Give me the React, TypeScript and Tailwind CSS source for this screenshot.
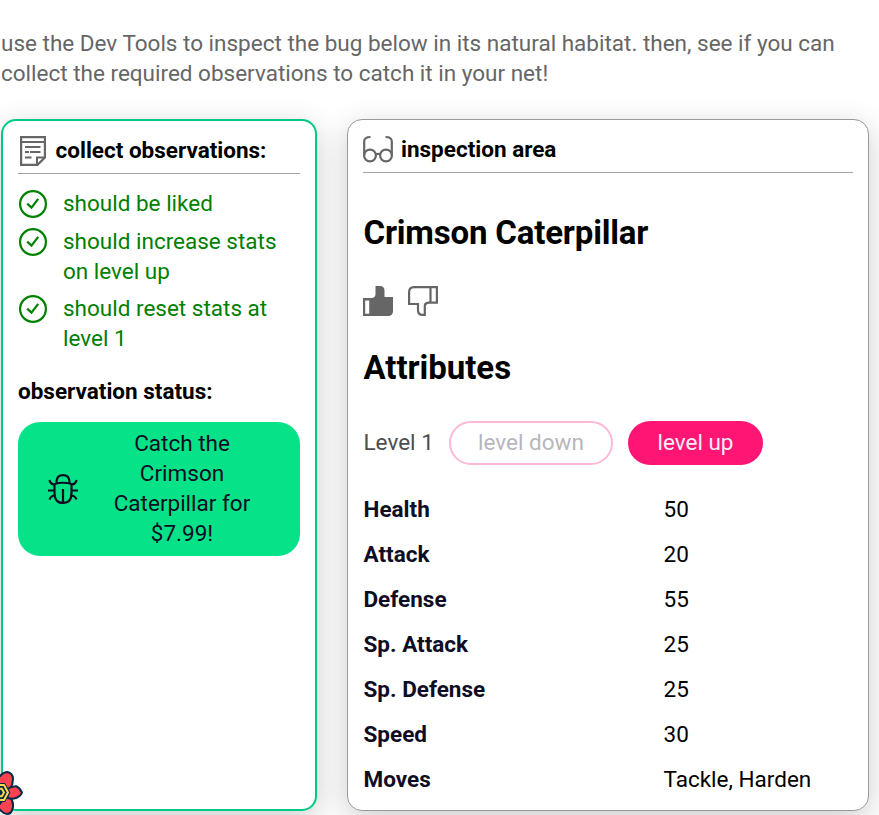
const stats: [string, string][] = [
  ['Health', '50'],
  ['Attack', '20'],
  ['Defense', '55'],
  ['Sp. Attack', '25'],
  ['Sp. Defense', '25'],
  ['Speed', '30'],
  ['Moves', 'Tackle, Harden'],
];

const observations = ['should be liked', 'should increase stats on level up', 'should reset stats at level 1'];

function NoteIcon() {
  return (
    <svg className="ml-[2px] h-[30px] w-[26px] shrink-0" viewBox="0 0 26 30" fill="none" stroke="#666" strokeWidth="2.200">
      <path d="M1.100 1.100H24.900V21.500L17.500 28.900H1.100Z" />
      <path d="M1 6H25M5 11H20.500M5 16H9M10 16H20.500M5 21.500H11.500M17 28.500V21.500H24.500" strokeWidth="2" />
    </svg>
  );
}

function GlassesIcon() {
  return (
    <svg className="h-[30px] w-[30px] shrink-0" viewBox="0 0 30 30" fill="none" stroke="#666" strokeWidth="2.200">
      <circle cx="7" cy="20.500" r="5.900" />
      <circle cx="23" cy="20.500" r="5.900" />
      <path d="M12.600 19.200Q15 18.400 17.400 19.200M1.200 20V6.500Q1.200 2 7.500 2M28.800 20V6.500Q28.800 2 22.500 2" />
    </svg>
  );
}

function CheckIcon() {
  return (
    <svg className="mt-[2px] h-7 w-7 shrink-0" viewBox="0 0 28 28" fill="none" stroke="#008000" strokeWidth="2.200">
      <circle cx="14" cy="14" r="12.900" />
      <path d="M8.200 13.600L12.500 17.600L19.200 8.800" strokeWidth="2.200" />
    </svg>
  );
}

function BugIcon() {
  return (
    <svg className="h-[30px] w-[30px] shrink-0" viewBox="0 0 30 30" fill="none" stroke="#0f0d23" strokeWidth="2.200">
      <path d="M6.500 10Q15 7.500 23.500 10V19Q23.500 28.900 15 28.900Q6.500 28.900 6.500 19ZM8.500 9V7.500Q9 1.200 15 1.200Q21 1.200 21.500 7.500V9M15 15V29M0 16.500H6.500M23.500 16.500H30M1.500 6Q2 10 6.500 10.500M28.500 6Q28 10 23.500 10.500M1.500 25.500Q3 21.500 7 21.500M28.500 25.500Q27 21.500 23 21.500" />
    </svg>
  );
}

function ThumbUp() {
  return (
    <svg className="h-[30px] w-[30px]" viewBox="0 0 30 30">
      <path fill="#666" fillRule="evenodd" d="M0 12H9Q12.500 11.500 12.500 8V0H17Q21.500 0 21.500 5V11H30V25Q30 30 25 30H0ZM2.200 14.500V27.800H6.200V14.500Z" />
    </svg>
  );
}

function ThumbDown() {
  return (
    <svg className="h-[30px] w-[30px]" viewBox="0 0 30 30" fill="none" stroke="#666" strokeWidth="2.200">
      <path d="M28.900 1.100V16.700H20.500Q16.800 17 16.800 20V28.900H14.500Q10 28.900 10 24V18H1.100V6Q1.100 1.100 6 1.100ZM22.500 1V16.500" />
    </svg>
  );
}

function FlowerBadge() {
  return (
    <svg className="absolute bottom-0 left-0 h-[45px] w-6" viewBox="0 0 24 45" stroke="#002b41" strokeWidth="2" strokeLinejoin="round">
      <g fill="#ff4154">
        <path d="M-2 9Q2 2 7.500 2Q12.500 3 13 8.500Q13 14 10.500 19L7 21L-2 14Z" />
        <path d="M-2 36L7 25L10 27Q13.500 31 13 37Q12 43.500 7.500 44Q2 43.500 -2 37Z" />
        <path d="M7 19Q12 16 16.500 16.300Q20 18 22 22.500Q21 26 16 28Q12 29.500 8 28Z" />
      </g>
      <path fill="#002b41" stroke="none" d="M-6 13H5L10.500 22.500L5 32H-6Z" />
      <path fill="none" stroke="#ffd94c" d="M-4 15H4L8 22.500L4 30H-4M-4 18.800H1.800L4 22.500L1.800 26.200H-4" />
    </svg>
  );
}

export default function App() {
  return (
    <div className="relative h-[815px] w-[879px] overflow-hidden bg-white font-['Roboto',sans-serif] text-[22.5px] leading-[30px] text-black">
      <p className="ml-px pt-7 text-[#666]">
        use the Dev Tools to inspect the bug below in its natural habitat. then, see if you can
        <br />
        collect the required observations to catch it in your net!
      </p>

      <main className="mt-[31px] flex h-[692px] gap-[30px] pl-px">
        <section className="w-[316px] shrink-0 rounded-[15px] border-2 border-[#00c986] bg-white px-[15px] pt-[15px] shadow-[0_8px_30px_rgba(0,0,0,0.2)]">
          <header className="flex h-[38px] items-start gap-[9.5px] border-b border-[#a0a0a0]">
            <NoteIcon />
            <h2 className="-mt-px font-bold">collect observations:</h2>
          </header>
          <ul className="mt-[14px] space-y-[7.5px]">
            {observations.map((o) => (
              <li key={o} className="flex gap-4 pl-px text-[#008000]">
                <CheckIcon />
                <span className="w-[225px]">{o}</span>
              </li>
            ))}
          </ul>
          <h3 className="mt-[23px] font-bold">observation status:</h3>
          <button className="mt-4 flex h-[134px] w-[282px] items-center rounded-[22px] bg-[#05e288] pl-[30px] text-[#0f0d23]">
            <BugIcon />
            <span className="ml-[30px] w-[148px] pb-[2px]">Catch the Crimson Caterpillar for $7.99!</span>
          </button>
        </section>

        <section className="w-[522px] shrink-0 rounded-[15px] border border-[#999] bg-white px-[15px] pt-[15px] shadow-[0_8px_30px_rgba(0,0,0,0.2)]">
          <header className="flex h-[38px] items-start gap-2 border-b border-[#a0a0a0]">
            <GlassesIcon />
            <h2 className="-mt-px font-bold">inspection area</h2>
          </header>
          <h1 className="mt-10 pl-[0.5px] text-[33px] leading-10 font-bold tracking-[-0.18px]">Crimson Caterpillar</h1>
          <div className="mt-[33px] flex gap-[15px]">
            <ThumbUp />
            <ThumbDown />
          </div>
          <h1 className="mt-8 pl-[0.5px] text-[33px] leading-10 font-bold tracking-[-0.05px]">Attributes</h1>
          <div className="mt-[33px] flex h-11 items-center">
            <span className="w-[86px] pb-[2px] pl-[0.5px] text-[#4d4d4d]">Level 1</span>
            <button className="h-11 w-[164px] rounded-full border-2 border-[#ffb8d6] pb-[2px] text-[#b7b6bd]">level down</button>
            <button className="ml-[15px] h-11 w-[135px] rounded-full bg-[#ff1574] pb-[2px] text-[#f3eef6]">level up</button>
          </div>
          <dl className="mt-[21px]">
            {stats.map(([k, v]) => (
              <div key={k} className="flex h-[45px] items-center pl-[0.5px]">
                <dt className="w-[300px] font-bold text-[#0f0d23]">{k}</dt>
                <dd>{v}</dd>
              </div>
            ))}
          </dl>
        </section>
      </main>
      <FlowerBadge />
    </div>
  );
}
